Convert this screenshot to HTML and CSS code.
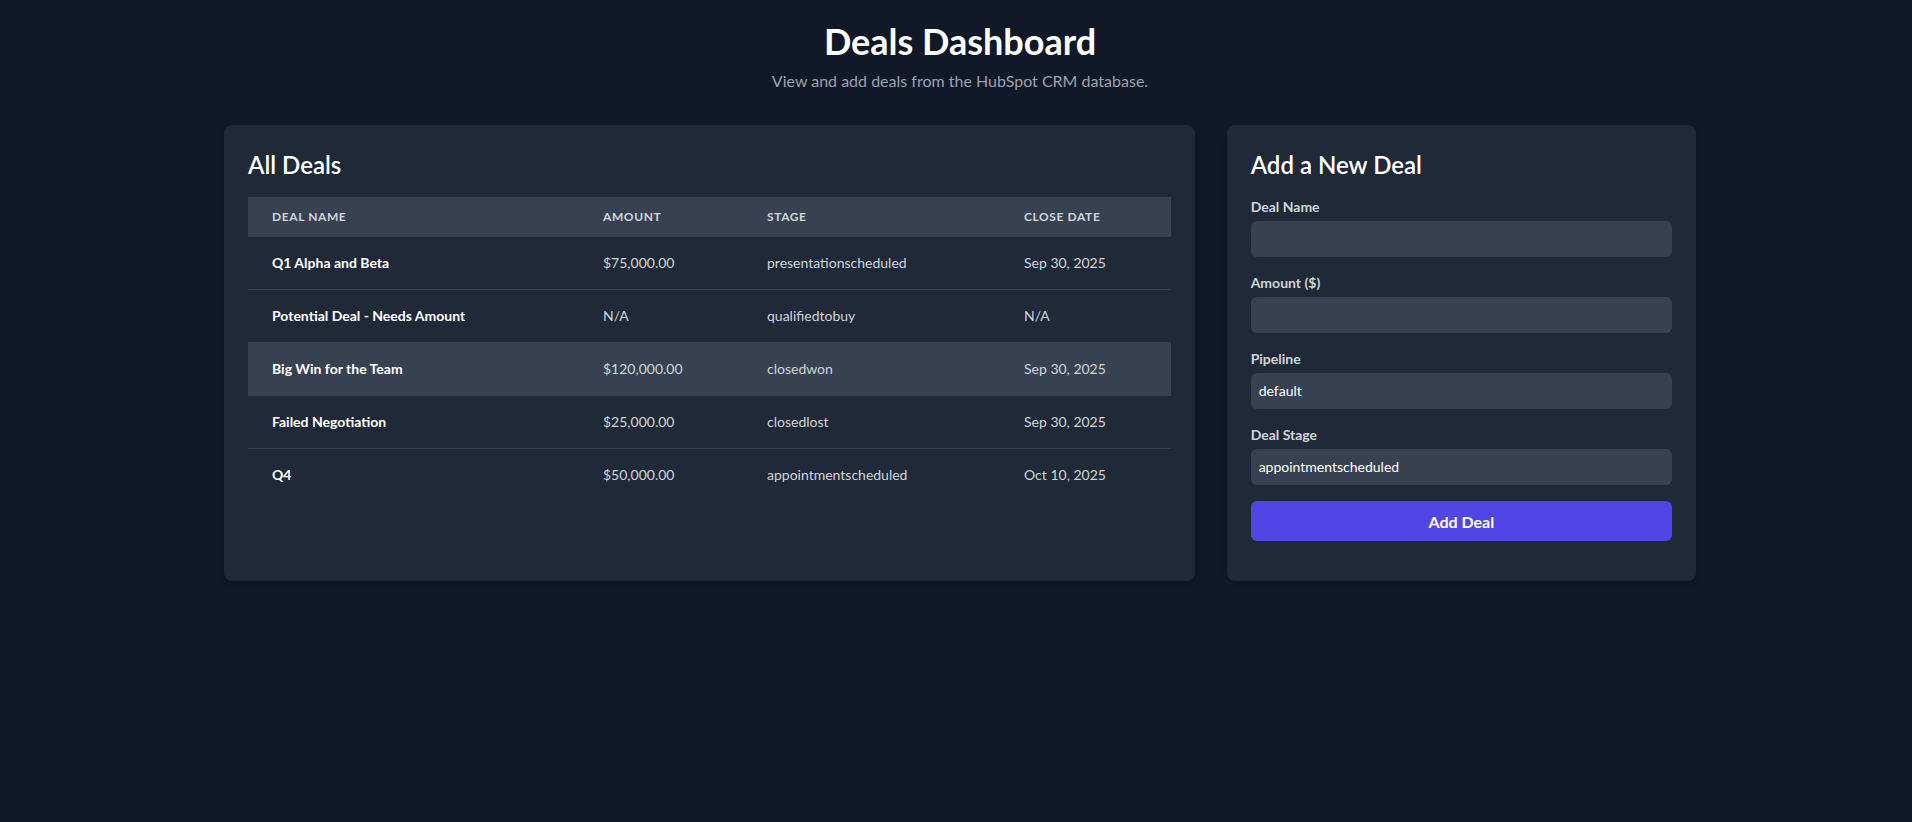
FILE: index.html
```html
<!DOCTYPE html>
<html lang="en">
<head>
<meta charset="utf-8">
<title>Deals Dashboard</title>
<link rel="stylesheet" href="styles.css">
</head>
<body>
<div class="page">
  <header class="header">
    <h1 class="title">Deals Dashboard</h1>
    <p class="subtitle">View and add deals from the HubSpot CRM database.</p>
  </header>
  <main class="grid">
    <section class="card card-wide">
      <h2 class="card-title">All Deals</h2>
      <table class="deals">
        <thead>
          <tr>
            <th class="col-name">Deal Name</th>
            <th class="col-amount">Amount</th>
            <th class="col-stage">Stage</th>
            <th class="col-date">Close Date</th>
          </tr>
        </thead>
        <tbody>
          <tr>
            <td class="cell-name">Q1 Alpha and Beta</td>
            <td>$75,000.00</td>
            <td>presentationscheduled</td>
            <td>Sep 30, 2025</td>
          </tr>
          <tr>
            <td class="cell-name">Potential Deal - Needs Amount</td>
            <td>N/A</td>
            <td>qualifiedtobuy</td>
            <td>N/A</td>
          </tr>
          <tr class="row-hover">
            <td class="cell-name">Big Win for the Team</td>
            <td>$120,000.00</td>
            <td>closedwon</td>
            <td>Sep 30, 2025</td>
          </tr>
          <tr>
            <td class="cell-name">Failed Negotiation</td>
            <td>$25,000.00</td>
            <td>closedlost</td>
            <td>Sep 30, 2025</td>
          </tr>
          <tr>
            <td class="cell-name">Q4</td>
            <td>$50,000.00</td>
            <td>appointmentscheduled</td>
            <td>Oct 10, 2025</td>
          </tr>
        </tbody>
      </table>
    </section>
    <section class="card">
      <h2 class="card-title">Add a New Deal</h2>
      <form class="form">
        <div class="field">
          <label class="label" for="dealname">Deal Name</label>
          <input class="control" id="dealname" type="text">
        </div>
        <div class="field">
          <label class="label" for="amount">Amount ($)</label>
          <input class="control" id="amount" type="text">
        </div>
        <div class="field">
          <label class="label" for="pipeline">Pipeline</label>
          <select class="control select" id="pipeline">
            <option>default</option>
          </select>
        </div>
        <div class="field">
          <label class="label" for="stage">Deal Stage</label>
          <select class="control select" id="stage">
            <option>appointmentscheduled</option>
          </select>
        </div>
        <button class="button" type="button">Add Deal</button>
      </form>
    </section>
  </main>
</div>
</body>
</html>
```
FILE: styles.css
```css
* { box-sizing: border-box; }

html, body {
  margin: 0;
  padding: 0;
}

body {
  background: #111827;
  color: #ffffff;
  font-family: Lato, "Noto Sans", sans-serif;
  min-height: 100vh;
}

.page {
  max-width: 1480px;
  margin: 0 auto;
  padding: 21px 0 0 8px;
}

.header {
  text-align: center;
}

.title {
  margin: 0;
  font-size: 36px;
  line-height: 40px;
  font-weight: 700;
  color: #ffffff;
}

.subtitle {
  margin: 8px 0 32px;
  font-size: 16px;
  line-height: 24px;
  color: #9ca3af;
}

.grid {
  display: grid;
  grid-template-columns: repeat(3, minmax(0, 1fr));
  gap: 32px;
}

.card {
  background: #1f2937;
  border-radius: 8px;
  padding: 24px;
  box-shadow: 0 4px 6px -1px rgba(0,0,0,0.1), 0 2px 4px -2px rgba(0,0,0,0.1);
}

.card-wide {
  grid-column: span 2;
}

.card-title {
  margin: 0 0 16px;
  font-size: 24px;
  line-height: 32px;
  font-weight: 600;
  color: #ffffff;
}

.deals {
  width: 100%;
  border-collapse: collapse;
  table-layout: fixed;
}

.deals thead tr {
  background: #374151;
}

.deals th {
  padding: 12px 24px;
  text-align: left;
  font-size: 12px;
  line-height: 16px;
  font-weight: 700;
  text-transform: uppercase;
  letter-spacing: 0.05em;
  color: #d1d5db;
}

.col-name { width: 331px; }
.col-amount { width: 164px; }
.col-stage { width: 257px; }

.deals td {
  padding: 16px 24px;
  font-size: 14px;
  line-height: 20px;
  color: #d1d5db;
  border-bottom: 1px solid #374151;
  white-space: nowrap;
}

.deals tbody tr:last-child td {
  border-bottom: none;
}

.deals td.cell-name {
  color: #ffffff;
  font-weight: 700;
}

.row-hover {
  background: #374151;
}

.form {
  margin-bottom: 16px;
}

.field {
  margin-bottom: 16px;
}

.label {
  display: block;
  font-size: 14px;
  line-height: 20px;
  font-weight: 700;
  color: #d1d5db;
}

.control {
  display: block;
  width: 100%;
  height: 36px;
  margin-top: 4px;
  padding: 8px;
  border: none;
  border-radius: 6px;
  background: #374151;
  color: #ffffff;
  font-family: inherit;
  font-size: 14px;
  line-height: 20px;
  outline: none;
}

.select {
  appearance: none;
  -webkit-appearance: none;
}

.button {
  display: block;
  width: 100%;
  height: 40px;
  border: none;
  border-radius: 6px;
  background: #4f46e5;
  color: #ffffff;
  font-family: inherit;
  font-size: 16px;
  font-weight: 700;
}
```
